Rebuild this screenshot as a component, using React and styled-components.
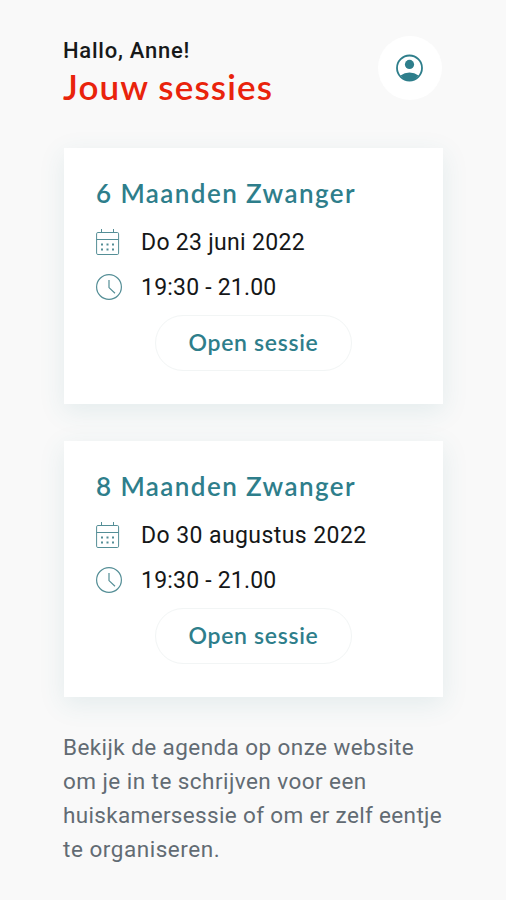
import React from 'react';
import styled, { createGlobalStyle } from 'styled-components';

const GlobalStyle = createGlobalStyle`
  * {
    box-sizing: border-box;
  }

  body {
    margin: 0;
    background: #f9f9f9;
    font-family: Roboto, sans-serif;
  }
`;

const Page = styled.main`
  width: 506px;
  height: 900px;
  padding: 36px 63px 0 64px;
  overflow: hidden;
  background: #f9f9f9;
`;

const Header = styled.header`
  display: flex;
  justify-content: space-between;
  height: 112px;
`;

const Greeting = styled.p`
  margin: 0 0 0 -1px;
  font-size: 22px;
  font-weight: 500;
  line-height: 30px;
  letter-spacing: 0.75px;
  color: #17191a;
`;

const Title = styled.h1`
  margin: -2px 0 0 -1px;
  font-family: Lato, sans-serif;
  font-size: 35px;
  font-weight: 600;
  line-height: 44px;
  letter-spacing: 1.12px;
  color: #e9230c;
`;

const ProfileButton = styled.button`
  display: flex;
  align-items: center;
  justify-content: center;
  width: 64px;
  height: 64px;
  margin: 0 1px 0 0;
  padding: 0;
  border: 0;
  border-radius: 50%;
  background: #fff;
  color: #2e7e8b;
`;

const Sessions = styled.section`
  display: grid;
  gap: 37px;
`;

const Card = styled.article`
  height: 256px;
  padding: 28px 32px 0;
  background: #fff;
  box-shadow: 0 7px 24px 1px rgba(46, 126, 139, 0.1);
`;

const CardTitle = styled.h2`
  margin: 0 0 14px;
  font-family: Lato, sans-serif;
  font-size: 26px;
  font-weight: 600;
  line-height: 34px;
  letter-spacing: 1.43px;
  white-space: nowrap;
  color: #2e7e8b;
`;

const Detail = styled.div`
  display: grid;
  grid-template-columns: 45px 1fr;
  align-items: center;
  height: 36px;
  margin-bottom: 9px;
  font-size: 23px;
  letter-spacing: ${({ $spacing }) => $spacing}px;
  color: #151718;

  svg {
    display: block;
    color: #548e96;
  }
`;

const OpenButton = styled.button`
  display: block;
  width: 197px;
  height: 56px;
  margin: 10px 0 0 59px;
  padding: 0 0 2px;
  border: 1px solid #f2f5f5;
  border-radius: 28px;
  background: #fff;
  font-family: Lato, sans-serif;
  font-size: 23px;
  font-weight: 600;
  letter-spacing: 0.7px;
  color: #2e7e8b;
`;

const Note = styled.p`
  margin: 34px -10px 0 -1px;
  font-size: 22.5px;
  line-height: 33.9px;
  color: #626b73;
`;

const NoteLine = styled.span`
  display: block;
  white-space: nowrap;
  letter-spacing: ${({ $spacing }) => $spacing}px;
`;

const ProfileIcon = () => (
  <svg width="28" height="28" viewBox="0 0 28 28">
    <circle cx="13.5" cy="14" r="12.5" fill="none" stroke="currentColor" strokeWidth="1.8" />
    <circle cx="13.5" cy="10.4" r="4.6" fill="currentColor" />
    <path d="M4.5 21.6Q8.5 18.4 13.5 18.4T22.5 21.6Q18.7 26.6 13.5 26.6T4.5 21.6Z" fill="currentColor" />
  </svg>
);

const CalendarIcon = () => (
  <svg width="26" height="28" viewBox="0 0 26 28" fill="none" stroke="currentColor">
    <rect x="0.6" y="4.5" width="22" height="22" rx="1.3" />
    <path d="M0.6 11.5h22M5.5 1v3.5M17.5 1v3.5" />
    <path d="M5 16.5h2M10.5 16.5h2M16 16.5h2M5 21.5h2M10.5 21.5h2M16 21.5h2" strokeWidth="1.8" />
  </svg>
);

const ClockIcon = () => (
  <svg width="27" height="28" viewBox="0 0 27 28" fill="none" stroke="currentColor">
    <circle cx="13" cy="14" r="12.4" strokeWidth="1.2" />
    <path d="M13 7v7.6l6 5.6" strokeWidth="1.2" />
  </svg>
);

const sessions = [
  { title: '6 Maanden Zwanger', date: 'Do 23 juni 2022', time: '19:30 - 21.00', spacing: 0.3 },
  { title: '8 Maanden Zwanger', date: 'Do 30 augustus 2022', time: '19:30 - 21.00', spacing: 0.42 },
];

const noteLines = [
  { text: 'Bekijk de agenda op onze website', spacing: 0.42 },
  { text: 'om je in te schrijven voor een', spacing: 0.45 },
  { text: 'huiskamersessie of om er zelf eentje', spacing: 0.34 },
  { text: 'te organiseren.', spacing: 0.53 },
];

const App = () => (
  <>
    <GlobalStyle />
    <Page>
      <Header>
        <div>
          <Greeting>Hallo, Anne!</Greeting>
          <Title>Jouw sessies</Title>
        </div>
        <ProfileButton aria-label="Profiel">
          <ProfileIcon />
        </ProfileButton>
      </Header>
      <Sessions>
        {sessions.map(({ title, date, time, spacing }) => (
          <Card key={title}>
            <CardTitle>{title}</CardTitle>
            <Detail $spacing={spacing}>
              <CalendarIcon />
              {date}
            </Detail>
            <Detail $spacing={0.2}>
              <ClockIcon />
              {time}
            </Detail>
            <OpenButton>Open sessie</OpenButton>
          </Card>
        ))}
      </Sessions>
      <Note>
        {noteLines.map(({ text, spacing }) => (
          <NoteLine key={text} $spacing={spacing}>
            {text}
          </NoteLine>
        ))}
      </Note>
    </Page>
  </>
);

export default App;
